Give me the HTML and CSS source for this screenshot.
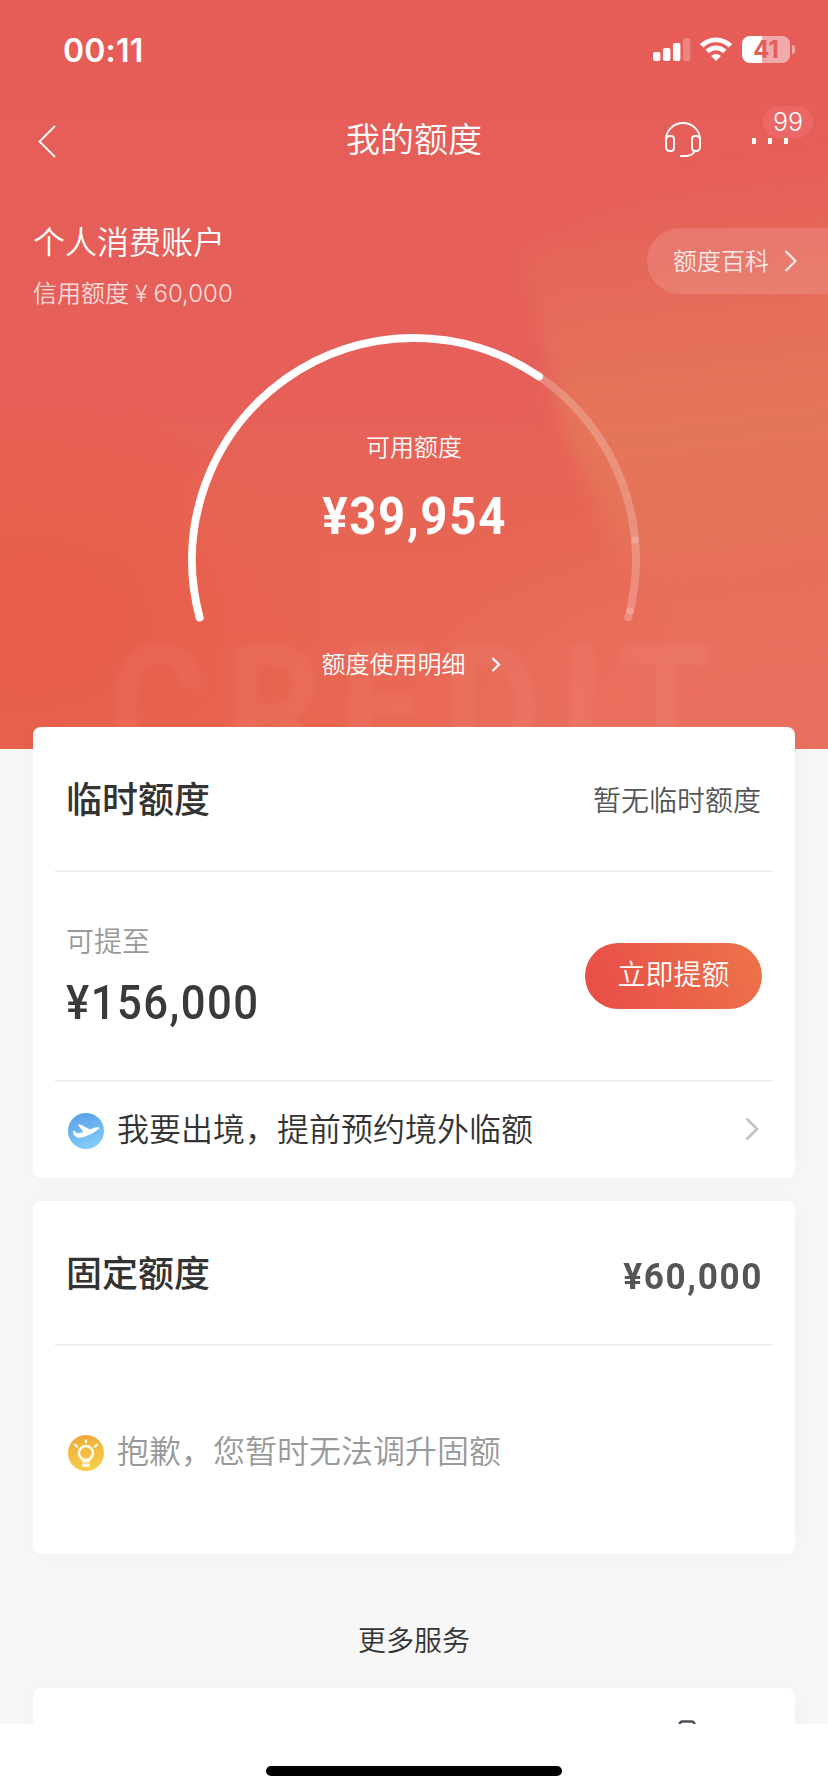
FILE: index.html
```html
<!DOCTYPE html>
<html lang="zh-CN">
<head>
<meta charset="utf-8">
<title>我的额度</title>
<link rel="stylesheet" href="styles.css">
</head>
<body>
<div class="screen">
  <header class="hero">
    <svg class="hero-bg" viewBox="0 0 828 749" aria-hidden="true">
      <defs>
        <linearGradient id="base" x1="0" y1="0" x2="0" y2="1">
          <stop offset="0" stop-color="#e65d58"/>
          <stop offset=".5" stop-color="#e65f59"/>
          <stop offset=".7" stop-color="#e76554"/>
          <stop offset="1" stop-color="#e86651"/>
        </linearGradient>
        <radialGradient id="left"><stop offset="0" stop-color="#e75e4b"/><stop offset=".4" stop-color="#e75e4b" stop-opacity=".8"/><stop offset="1" stop-color="#e75e4b" stop-opacity="0"/></radialGradient>
        <radialGradient id="right"><stop offset="0" stop-color="#ea705f"/><stop offset=".4" stop-color="#ea705f" stop-opacity=".85"/><stop offset="1" stop-color="#ea705f" stop-opacity="0"/></radialGradient>
        <linearGradient id="wedge" gradientUnits="userSpaceOnUse" x1="640" y1="170" x2="700" y2="700">
          <stop offset="0" stop-color="#e4735a" stop-opacity="0"/>
          <stop offset=".3" stop-color="#e5735a" stop-opacity=".75"/>
          <stop offset=".5" stop-color="#e57658"/>
          <stop offset=".7" stop-color="#e57459" stop-opacity=".8"/>
          <stop offset="1" stop-color="#e8705c" stop-opacity="0"/>
        </linearGradient>
        <filter id="soft" x="-20%" y="-20%" width="140%" height="140%"><feGaussianBlur stdDeviation="10"/></filter>
        <filter id="mark"><feGaussianBlur stdDeviation="2.5"/></filter>
      </defs>
      <rect width="828" height="749" fill="url(#base)"/>
      <ellipse cx="30" cy="620" rx="300" ry="230" fill="url(#left)"/>
      <ellipse cx="800" cy="720" rx="480" ry="240" fill="url(#right)"/>
      <path d="M520 250L640 190L860 140V720H720L620 560L560 420Z" fill="url(#wedge)" filter="url(#soft)"/>
      <text class="watermark" transform="scale(.86 1)" x="126" y="770" textLength="704" lengthAdjust="spacing" filter="url(#mark)">CREDIT</text>
    </svg>

    <div class="statusbar">
      <span class="time">00:11</span>
      <div class="indicators">
        <svg width="38" height="27" viewBox="0 0 38 27" fill="#fff">
          <rect x="0" y="16" width="7.4" height="9" rx="2"/><rect x="10" y="12" width="7.4" height="13" rx="2"/>
          <rect x="20" y="7" width="7.4" height="18" rx="2"/><rect x="30" y="2" width="7.4" height="23" rx="2" opacity=".25"/>
        </svg>
        <svg class="wifi" width="32" height="27" viewBox="0 0 32 27" fill="none" stroke="#fff" stroke-width="4.8">
          <path d="M1.6 9.8a20.5 20.5 0 0 1 28.8 0"/><path d="M7.2 15.5a12.6 12.6 0 0 1 17.6 0"/>
          <path d="M16 25l-4.9-5a7 7 0 0 1 9.8 0z" fill="#fff" stroke="none"/>
        </svg>
        <div class="battery">41</div><i class="nub"></i>
      </div>
    </div>

    <nav class="navbar">
      <svg class="back" width="18" height="33" viewBox="0 0 18 33"><path d="M17 1L1.5 16.5L17 32" fill="none" stroke="#fff" stroke-width="1.8"/></svg>
      <h1 class="page-title">我的额度</h1>
      <div class="nav-actions">
        <svg width="36" height="36" viewBox="0 0 36 36" fill="none" stroke="#fff" stroke-width="1.9">
          <path d="M1 25V17.5a16.8 16.3 0 0 1 34 0V25"/>
          <path d="M1 18q0-4 4-4h1q3 0 3 3v9q0 3-3 3H5q-4 0-4-4z"/>
          <path d="M35 18q0-4-4-4h-1q-3 0-3 3v9q0 3 3 3h1q4 0 4-4z"/>
          <path d="M30 29q-3 5-9 5h-6"/>
        </svg>
        <div class="more"><i></i><i></i><i></i><span class="badge">99</span></div>
      </div>
    </nav>

    <div class="account">
      <div>
        <h2 class="account-name">个人消费账户</h2>
        <p class="account-limit"><span>信用额度</span><span class="yen">¥</span><span>60,000</span></p>
      </div>
      <a class="wiki"><span>额度百科</span>
        <svg width="13" height="22" viewBox="0 0 13 22"><path d="M1.5 1L11.5 11L1.5 21" fill="none" stroke="#fff" stroke-opacity=".85" stroke-width="2.2"/></svg>
      </a>
    </div>

    <div class="gauge">
      <svg class="gauge-arc" width="460" height="300" viewBox="0 0 460 300" fill="none" stroke-linecap="round" stroke-width="8">
        <path d="M355 46.5A222 222 0 0 1 444.4 287.5" stroke="#fff" stroke-opacity=".22"/>
        <path d="M15.6 287.5A222 222 0 0 1 355 46.5" stroke="#fff"/>
        <circle cx="451" cy="210" r="3.6" fill="#fff" fill-opacity=".2"/>
        <circle cx="446.3" cy="281" r="3.6" fill="#fff" fill-opacity=".2"/>
      </svg>
      <p class="gauge-label">可用额度</p>
      <p class="gauge-amount"><span>¥39,954</span></p>
      <a class="gauge-link"><span>额度使用明细</span>
        <svg width="10" height="15" viewBox="0 0 10 15"><path d="M1.5 1L8 7.5L1.5 14" fill="none" stroke="#fff" stroke-width="2.2"/></svg>
      </a>
    </div>
  </header>

  <main class="content">
    <section class="card card-temp">
      <div class="card-head"><h3>临时额度</h3><span class="status">暂无临时额度</span></div>
      <div class="raise">
        <div>
          <p class="raise-label">可提至</p>
          <p class="raise-amount"><span>¥156,000</span></p>
        </div>
        <button class="raise-btn">立即提额</button>
      </div>
      <a class="tip travel">
        <svg width="36" height="36" viewBox="0 0 36 36">
          <defs><linearGradient id="sky" x1=".3" y1="0" x2=".6" y2="1"><stop offset="0" stop-color="#5a9fe8"/><stop offset="1" stop-color="#83cff8"/></linearGradient></defs>
          <circle cx="18" cy="18" r="18" fill="url(#sky)"/>
          <path d="M4.8 18.4q1-1.7 2.5.5l2 1.3 6.300-.9-5.800-7.600q1-.8 2.600-.2l9.600 5q5-2.600 8.200-2.200 2 .5.4 1.800-7 6-15.800 8.200-5.600 1-7.400-.7-2-1.500-2.600-5.200z" fill="#fff"/>
        </svg>
        <span>我要出境，提前预约境外临额</span>
        <svg class="go" width="14" height="24" viewBox="0 0 14 24"><path d="M1.5 1.500L12 12L1.500 22.500" fill="none" stroke="#c3c3c3" stroke-width="2.800"/></svg>
      </a>
    </section>

    <section class="card card-fixed">
      <div class="card-head"><h3>固定额度</h3><span class="fixed-amount"><span>¥60,000</span></span></div>
      <div class="tip sorry">
        <svg width="36" height="36" viewBox="0 0 36 36">
          <defs><linearGradient id="gold" x1=".4" y1="0" x2=".6" y2="1"><stop offset="0" stop-color="#f0aa3c"/><stop offset="1" stop-color="#f7d04a"/></linearGradient></defs>
          <circle cx="18" cy="18" r="18" fill="url(#gold)"/>
          <g fill="none" stroke="#fffbe8" stroke-linecap="round">
            <circle cx="18" cy="18" r="7" stroke-width="2.600"/>
            <path d="M14 24l1.400 2.600h5.200L22 24" stroke-width="2"/>
            <path d="M18 5.800v1.200M7 9.800l2 1.600M29 9.800l-2 1.600" stroke-width="2.400"/>
          </g>
          <path d="M14 28.500h8v1.700q0 1.800-2 1.800h-4q-2 0-2-1.800z" fill="#fffbe8"/>
        </svg>
        <span>抱歉，您暂时无法调升固额</span>
      </div>
    </section>

    <h3 class="more-title">更多服务</h3>
    <section class="card card-services">
      <svg width="18" height="20" viewBox="0 0 18 20"><rect x="1.500" y="1.500" width="15" height="22" rx="3" fill="none" stroke="#55495c" stroke-width="2.600"/></svg>
    </section>
  </main>

  <footer class="home"><i class="home-bar"></i></footer>
</div>
</body>
</html>
```

FILE: styles.css
```css
* { box-sizing: border-box; margin: 0; padding: 0; }
body { width: 828px; background: #f7f7f7; font-family: "Noto Sans CJK SC", sans-serif; color: #3a3a3a; font-weight: 350; }
h1, h2, h3 { font-weight: 350; }
i { display: block; }
svg { display: block; flex: none; }

.screen { width: 828px; height: 1792px; display: flex; flex-direction: column; overflow: hidden; }

/* red header */
.hero { position: relative; height: 749px; flex: none; color: #fff; isolation: isolate; }
.hero-bg { position: absolute; inset: 0; width: 828px; height: 749px; z-index: -1; }
.watermark { font: 700 176px "Roboto", sans-serif; fill: #fff; fill-opacity: .04; }

.statusbar { height: 100px; padding: 0 33px 0 63px; display: flex; justify-content: space-between; }
.time { font: 600 32px/101px "Inter", sans-serif; letter-spacing: .2px; }
.indicators { display: flex; align-items: center; padding-bottom: 1px; }
.wifi { margin-left: 9px; }
.battery { margin-left: 10px; width: 48px; height: 27px; border-radius: 8px; background: linear-gradient(90deg, #fff 42%, #f1abaa 42%); color: #e65d58; font: 700 24px/27px "Inter", sans-serif; text-align: center; }
.nub { width: 3px; height: 9px; margin-left: 2px; border-radius: 0 4px 4px 0; background: #f1abaa; }

.navbar { height: 80px; padding: 0 40px 0 38px; display: grid; grid-template-columns: 1fr auto 1fr; align-items: center; }
.back { margin-top: 2px; }
.page-title { font-size: 34px; line-height: 76px; padding-bottom: 4px; margin-left: 2px; }
.nav-actions { display: flex; justify-content: flex-end; align-items: center; gap: 51px; }
.more { position: relative; display: flex; gap: 12px; margin-top: 2px; }
.more i { width: 4px; height: 6px; background: #fff; }
.badge { position: absolute; left: 11px; bottom: 6px; width: 50px; height: 32px; border-radius: 16px; background: rgba(237, 108, 108, .7); font: 350 25px/33px "Inter", sans-serif; text-align: center; }

.account { height: 154px; padding: 37px 0 0 33px; display: flex; justify-content: space-between; }
.account-name { font-size: 32px; line-height: 46px; }
.account-limit { display: flex; font-size: 24px; line-height: 36px; margin-top: 13px; color: rgba(255, 255, 255, .8); font-family: "Inter", "Noto Sans CJK SC", sans-serif; }
.account-limit .yen { margin: 0 6px 0 6px; font-size: 23px; }
.wiki { margin-top: 11px; width: 181px; height: 66px; padding-left: 26px; border-radius: 33px 0 0 33px; background: rgba(255, 255, 255, .12); display: flex; align-items: center; gap: 15px; font-size: 24px; color: rgba(255, 255, 255, .85); }
.wiki span { margin-top: -4px; }

.gauge { position: relative; height: 415px; padding-top: 94px; display: flex; flex-direction: column; align-items: center; }
.gauge-arc { position: absolute; left: 184px; top: -4px; }
.gauge-label { font-size: 24px; line-height: 36px; }
.gauge-amount { margin-top: 18px; font: 700 52px/70px "Roboto", sans-serif; }
.gauge-amount span { display: inline-block; transform: scaleX(.91); letter-spacing: 1.9px; margin-right: -2px; }
.gauge-link { margin: 93px 6px 0 0; display: flex; align-items: center; gap: 25px; font-size: 24px; line-height: 36px; }
.gauge-link svg { margin-top: 2px; }

/* white cards */
.content { flex: 1; min-height: 0; overflow: hidden; margin-top: -22px; padding: 0 33px; position: relative; }
.card { background: #fff; border-radius: 8px; box-shadow: 0 0 24px rgba(0, 0, 0, .035); }
.card-temp { height: 451px; margin-bottom: 23px; }
.card-fixed { height: 353px; }
.card-head { height: 145px; margin: 0 22px; padding: 0 12px 0 11px; border-bottom: 2px solid #f0f0f0; display: flex; align-items: center; justify-content: space-between; }
.card-head h3 { font-size: 36px; line-height: 54px; font-weight: 500; color: #333; margin-top: -4px; }
.status { font-size: 28px; color: #555; margin-top: 1px; }
.raise { height: 210px; margin: 0 22px; padding: 0 11px 0 11px; border-bottom: 2px solid #f0f0f0; display: flex; align-items: center; justify-content: space-between; }
.raise-label { font-size: 28px; line-height: 40px; color: #999; }
.raise-amount { margin-top: 11px; margin-bottom: -3px; font: 500 48px/64px "Roboto", sans-serif; color: #3a3a3a; }
.raise-amount span { display: inline-block; transform: scaleX(.91); letter-spacing: 1.6px; transform-origin: 0 50%; }
.raise-btn { width: 177px; height: 66px; border: 0; border-radius: 33px; background: linear-gradient(70deg, #e84c48, #ec744a); color: #fff; font: 350 28px/60px "Noto Sans CJK SC", sans-serif; padding-bottom: 6px; }
.tip { display: flex; align-items: center; font-size: 32px; line-height: 48px; margin: 0 36px 0 35px; }
.tip span { margin-left: 13px; margin-top: -9px; }
.travel { height: 98px; color: #333; }
.go { margin-left: auto; margin-top: -5px; }
.fixed-amount { font: 700 37px/48px "Roboto", sans-serif; color: #555; margin-top: 9px; }
.fixed-amount span { display: inline-block; transform: scaleX(.95); letter-spacing: 1.7px; margin-right: -1.7px; transform-origin: 100% 50%; }
.sorry { height: 214px; color: #999; }
.more-title { font-size: 28px; line-height: 42px; text-align: center; padding: 64px 0 28px; color: #333; }
.card-services { height: 60px; padding: 32px 0 0 645px; overflow: hidden; }

.home { height: 68px; flex: none; background: #fff; position: relative; }
.home-bar { width: 296px; height: 10px; margin: 42px auto 0; border-radius: 5px; background: #000; }
```
